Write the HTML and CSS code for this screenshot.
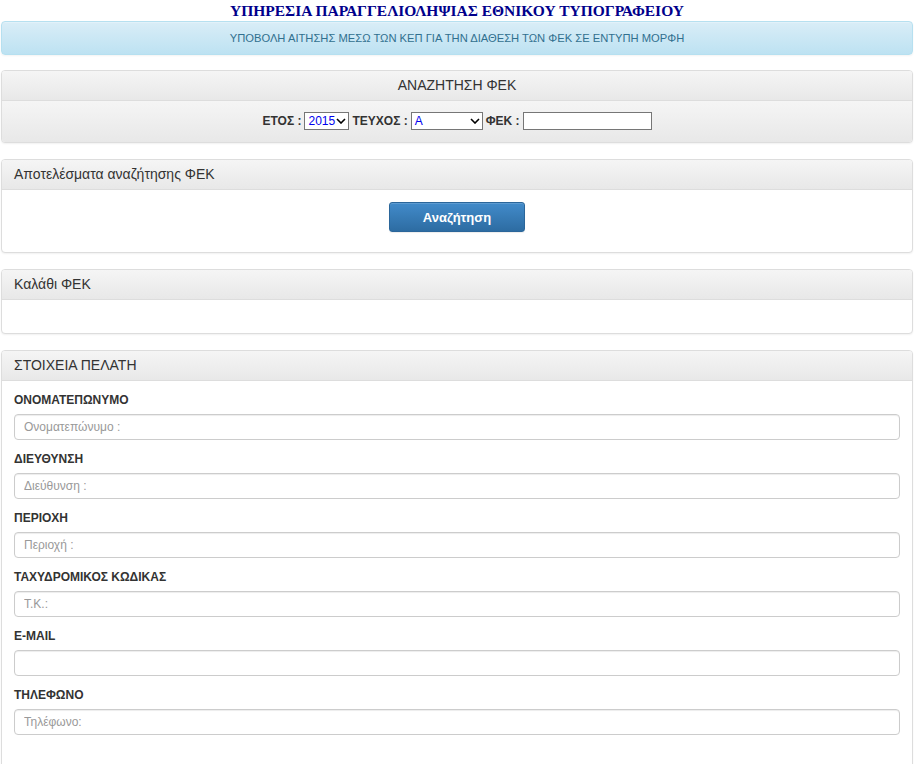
FILE: index.html
```html
<!DOCTYPE html>
<html lang="el">
<head>
<meta charset="utf-8">
<title>Υπηρεσία Παραγγελιοληψίας</title>
<link rel="stylesheet" href="styles.css">
</head>
<body>
<div class="page">
  <h1 class="title">ΥΠΗΡΕΣΙΑ ΠΑΡΑΓΓΕΛΙΟΛΗΨΙΑΣ ΕΘΝΙΚΟΥ ΤΥΠΟΓΡΑΦΕΙΟΥ</h1>
  <div class="alert">ΥΠΟΒΟΛΗ ΑΙΤΗΣΗΣ ΜΕΣΩ ΤΩΝ ΚΕΠ ΓΙΑ ΤΗΝ ΔΙΑΘΕΣΗ ΤΩΝ ΦΕΚ ΣΕ ΕΝΤΥΠΗ ΜΟΡΦΗ</div>

  <div class="panel">
    <div class="panel-heading center">ΑΝΑΖΗΤΗΣΗ ΦΕΚ</div>
    <div class="panel-search">
      <span class="lbl">ΕΤΟΣ :</span>
      <span class="select sel-year">2015<svg class="chev" viewBox="0 0 10 6" width="10" height="6"><path d="M1 1 L5 5 L9 1" fill="none" stroke="#000" stroke-width="1.6"/></svg></span>
      <span class="lbl">ΤΕΥΧΟΣ :</span>
      <span class="select sel-issue">Α<svg class="chev" viewBox="0 0 10 6" width="10" height="6"><path d="M1 1 L5 5 L9 1" fill="none" stroke="#000" stroke-width="1.6"/></svg></span>
      <span class="lbl">ΦΕΚ :</span>
      <input class="fek-input" type="text">
    </div>
  </div>

  <div class="panel">
    <div class="panel-heading">Αποτελέσματα αναζήτησης ΦΕΚ</div>
    <div class="panel-body btn-body">
      <button class="btn" type="button">Αναζήτηση</button>
    </div>
  </div>

  <div class="panel">
    <div class="panel-heading">Καλάθι ΦΕΚ</div>
    <div class="panel-body empty"></div>
  </div>

  <div class="panel last">
    <div class="panel-heading">ΣΤΟΙΧΕΙΑ ΠΕΛΑΤΗ</div>
    <div class="panel-body form-body">
      <div class="group"><label class="flabel">ΟΝΟΜΑΤΕΠΩΝΥΜΟ</label><input class="field" type="text" placeholder="Ονοματεπώνυμο :"></div>
      <div class="group"><label class="flabel">ΔΙΕΥΘΥΝΣΗ</label><input class="field" type="text" placeholder="Διεύθυνση :"></div>
      <div class="group"><label class="flabel">ΠΕΡΙΟΧΗ</label><input class="field" type="text" placeholder="Περιοχή :"></div>
      <div class="group"><label class="flabel">ΤΑΧΥΔΡΟΜΙΚΟΣ ΚΩΔΙΚΑΣ</label><input class="field" type="text" placeholder="Τ.Κ.:"></div>
      <div class="group"><label class="flabel">E-MAIL</label><input class="field" type="text"></div>
      <div class="group"><label class="flabel">ΤΗΛΕΦΩΝΟ</label><input class="field" type="text" placeholder="Τηλέφωνο:"></div>
    </div>
  </div>
</div>
</body>
</html>
```

FILE: styles.css
```css
* { box-sizing: border-box; }
html, body { margin: 0; padding: 0; background: #fff; }
body {
  font-family: "Liberation Sans", Arial, sans-serif;
  font-size: 14px;
  color: #333;
}
.page {
  margin: 0 6px 0 1px;
}
.title {
  margin: 0;
  height: 21px;
  line-height: 21px;
  text-align: center;
  font-family: "Liberation Serif", "Times New Roman", serif;
  font-weight: bold;
  font-size: 15.5px;
  color: #00008b;
}
.alert {
  height: 34px;
  line-height: 32px;
  margin-bottom: 15px;
  border: 1px solid #b6e0f0;
  border-radius: 4px;
  background: linear-gradient(to bottom, #d9edf7 0%, #bde2f2 100%);
  box-shadow: inset 0 1px 0 rgba(255,255,255,.25), 0 1px 2px rgba(0,0,0,.05);
  color: #31708f;
  font-size: 11.2px;
  text-align: center;
}
.panel {
  border: 1px solid #ddd;
  border-radius: 4px;
  background: #fff;
  box-shadow: 0 1px 2px rgba(0,0,0,.06);
  margin-bottom: 16px;
  overflow: hidden;
}
.panel-heading {
  height: 30px;
  line-height: 28px;
  padding: 0 12px;
  border-bottom: 1px solid #ddd;
  background: linear-gradient(to bottom, #f5f5f5 0%, #e8e8e8 100%);
  font-size: 14px;
  color: #333;
}
.panel-heading.center { text-align: center; }
.panel-search {
  height: 41px;
  display: flex;
  align-items: center;
  justify-content: center;
  gap: 3px;
  background: linear-gradient(to bottom, #f5f5f5 0%, #e8e8e8 100%);
  padding-bottom: 1px;
}
.lbl {
  font-weight: bold;
  font-size: 12px;
  color: #333;
}
.select {
  display: inline-flex;
  align-items: center;
  justify-content: space-between;
  height: 18px;
  border: 1px solid #767676;
  background: #fff;
  color: #0000ee;
  font-size: 12px;
  padding: 0 2px 0 3px;
}
.sel-year { width: 45px; }
.sel-issue { width: 72px; }
.chev { flex: none; }
.fek-input {
  width: 129px;
  height: 18px;
  border: 1px solid #767676;
  margin: 0;
  padding: 0 2px;
  font-size: 12px;
}
.panel-body { padding: 12px; }
.btn-body {
  display: flex;
  justify-content: center;
  padding: 12px 12px 20px;
}
.btn {
  width: 136px;
  height: 30px;
  border: 1px solid #2b669a;
  border-radius: 3px;
  background: linear-gradient(to bottom, #428bca 0%, #2d6ca2 100%);
  box-shadow: inset 0 1px 0 rgba(255,255,255,.15), 0 1px 1px rgba(0,0,0,.075);
  color: #fff;
  font-family: "Liberation Sans", Arial, sans-serif;
  font-weight: bold;
  font-size: 13px;
  padding: 0;
}
.empty { height: 33px; padding: 0; }
.last { margin-bottom: 0; min-height: 420px; }
.form-body { padding: 12px 12px 20px; }
.group { margin-bottom: 12px; }
.flabel {
  display: block;
  font-weight: bold;
  font-size: 12px;
  line-height: 15px;
  margin-bottom: 6px;
  color: #333;
}
.field {
  display: block;
  width: 100%;
  height: 26px;
  margin: 0;
  border: 1px solid #ccc;
  border-radius: 4px;
  padding: 0 9px;
  font-family: "Liberation Sans", Arial, sans-serif;
  font-size: 12px;
  color: #555;
  box-shadow: inset 0 1px 1px rgba(0,0,0,.075);
}
.field::placeholder { color: #999; }
```
